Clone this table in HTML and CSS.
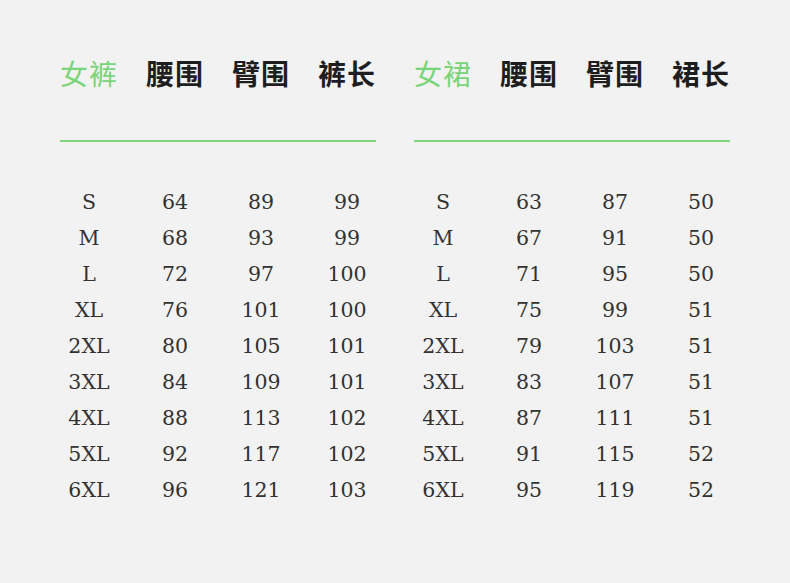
FILE: index.html
```html
<!DOCTYPE html>
<html lang="zh">
<head>
<meta charset="utf-8">
<link rel="stylesheet" href="styles.css">
</head>
<body>
<div class="page">
  <div class="table">
    <div class="row head">
      <span class="accent">女裤</span><span>腰围</span><span>臂围</span><span>裤长</span>
    </div>
    <div class="rule"></div>
    <div class="body">
      <div class="row"><span>S</span><span>64</span><span>89</span><span>99</span></div>
      <div class="row"><span>M</span><span>68</span><span>93</span><span>99</span></div>
      <div class="row"><span>L</span><span>72</span><span>97</span><span>100</span></div>
      <div class="row"><span>XL</span><span>76</span><span>101</span><span>100</span></div>
      <div class="row"><span>2XL</span><span>80</span><span>105</span><span>101</span></div>
      <div class="row"><span>3XL</span><span>84</span><span>109</span><span>101</span></div>
      <div class="row"><span>4XL</span><span>88</span><span>113</span><span>102</span></div>
      <div class="row"><span>5XL</span><span>92</span><span>117</span><span>102</span></div>
      <div class="row"><span>6XL</span><span>96</span><span>121</span><span>103</span></div>
    </div>
  </div>
  <div class="table">
    <div class="row head">
      <span class="accent">女裙</span><span>腰围</span><span>臂围</span><span>裙长</span>
    </div>
    <div class="rule"></div>
    <div class="body">
      <div class="row"><span>S</span><span>63</span><span>87</span><span>50</span></div>
      <div class="row"><span>M</span><span>67</span><span>91</span><span>50</span></div>
      <div class="row"><span>L</span><span>71</span><span>95</span><span>50</span></div>
      <div class="row"><span>XL</span><span>75</span><span>99</span><span>51</span></div>
      <div class="row"><span>2XL</span><span>79</span><span>103</span><span>51</span></div>
      <div class="row"><span>3XL</span><span>83</span><span>107</span><span>51</span></div>
      <div class="row"><span>4XL</span><span>87</span><span>111</span><span>51</span></div>
      <div class="row"><span>5XL</span><span>91</span><span>115</span><span>52</span></div>
      <div class="row"><span>6XL</span><span>95</span><span>119</span><span>52</span></div>
    </div>
  </div>
</div>
</body>
</html>
```
FILE: styles.css
```css
html, body {
  margin: 0;
  padding: 0;
  background: #f2f2f2;
}
.page {
  width: 790px;
  height: 583px;
  box-sizing: border-box;
  padding: 53px 0 0 60px;
  display: flex;
  gap: 38px;
  color: #222;
}
.table {
  width: 316px;
  display: flex;
  flex-direction: column;
}
.row {
  display: grid;
  grid-template-columns: repeat(4, 58px);
  justify-content: space-between;
}
.row span {
  text-align: center;
  white-space: nowrap;
  margin: 0 -10px;
}
.head {
  font-family: "Noto Sans CJK SC", sans-serif;
  font-weight: 700;
  font-size: 28px;
  line-height: 40px;
  letter-spacing: 1px;
  color: #1e1e1e;
}
.accent {
  color: #7ad47a;
  font-weight: 400;
}
.rule {
  height: 2px;
  background: #7ed87e;
  margin-top: 47px;
}
.body {
  margin-top: 42px;
  font-family: "DejaVu Serif", serif;
  font-size: 20.5px;
  line-height: 36px;
  color: #333;
}
```
